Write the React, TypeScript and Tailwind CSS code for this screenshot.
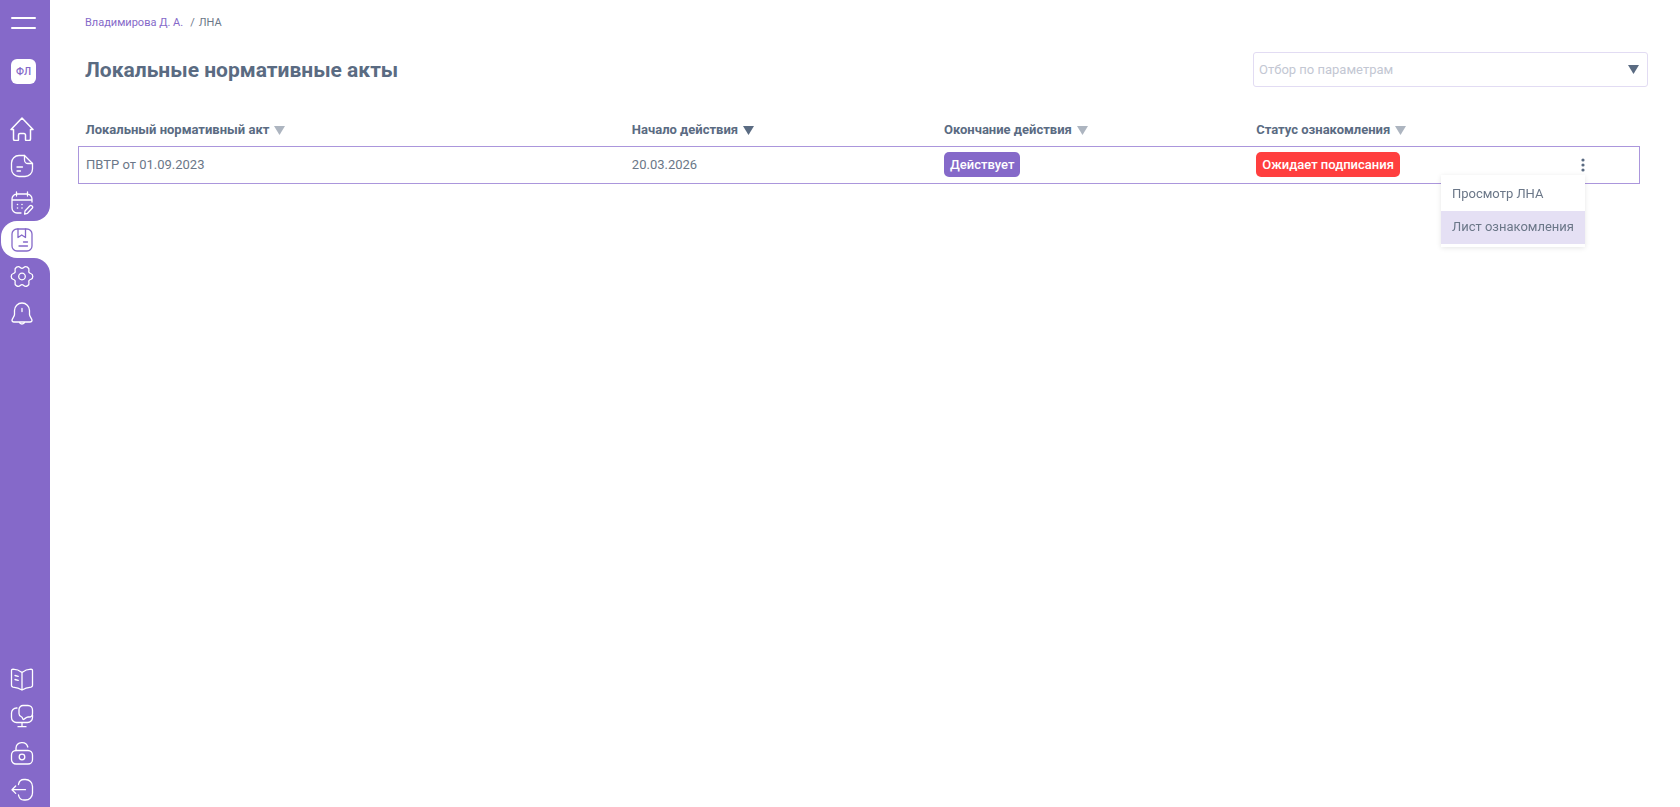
import type { ReactNode } from "react";

interface IconProps {
  children: ReactNode;
}

const Icon = ({ children }: IconProps) => (
  <svg
    viewBox="0 0 24 24"
    className="size-6"
    fill="none"
    stroke="currentColor"
    strokeWidth="1.3"
    strokeLinecap="round"
    strokeLinejoin="round"
    aria-hidden="true"
  >
    {children}
  </svg>
);

const HomeIcon = () => (
  <Icon>
    <path
      strokeWidth="1.5"
      d="M1 12.5 12 1l11 11.5h-2.5V22a1.500 1.500 0 0 1-1.500 1.500h-2.500a1 1 0 0 1-1-1V18a1.500 1.500 0 0 0-1.500-1.500h-4A1.500 1.500 0 0 0 8.500 18v4.500a1 1 0 0 1-1 1H5A1.500 1.500 0 0 1 3.500 22v-9.500Z"
    />
  </Icon>
);

const DocumentIcon = () => (
  <Icon>
    <path d="M14.500 1.500H9a7.500 7.500 0 0 0-7.500 7.500v6A7.500 7.500 0 0 0 9 22.500h6a7.500 7.500 0 0 0 7.500-7.500V9.500Z" />
    <path d="M14.500 1.500V6A3.500 3.500 0 0 0 18 9.500h4.500M7 13h5.500M7 17h3.500" />
  </Icon>
);

const CalendarIcon = () => (
  <Icon>
    <path d="M6.500 1v4M17.500 1v4M2 9h20M22 11V8a5 5 0 0 0-5-5H7a5 5 0 0 0-5 5v9a5 5 0 0 0 5 5h4" />
    <path d="M7.500 13.500h.01M12 13.500h.01M7.500 17h.01M12 17h.01" strokeWidth="1.6" />
    <path d="m15 20 4.700-5a1.700 1.700 0 0 1 2.500 2.300l-4.700 5-2.900.7Z" />
  </Icon>
);

const BookmarkIcon = () => (
  <Icon>
    <rect x="2" y="1" width="20" height="22" rx="5" />
    <path d="M8 1v8.500l3.700-2.500 3.800 2.500V1M13.500 14h4M9 18h8.500" />
  </Icon>
);

const SettingsIcon = () => (
  <Icon>
    <g transform="translate(12 11.5)">
      <path d="M10.800 0C10.800 3.800 8.010 2.320 7.010 4.050C6.010 5.780 8.690 7.450 5.400 9.350C2.110 11.250 2 8.100 0 8.100C-2 8.100-2.110 11.250-5.400 9.350C-8.690 7.450-6.010 5.780-7.010 4.050C-8.010 2.320-10.800 3.800-10.800 0C-10.800-3.800-8.010-2.320-7.010-4.050C-6.010-5.780-8.690-7.450-5.400-9.350C-2.110-11.250-2-8.100 0-8.100C2-8.100 2.110-11.250 5.400-9.350C8.690-7.450 6.010-5.780 7.010-4.050C8.010-2.320 10.800-3.800 10.800 0Z" />
      <circle r="3.300" />
    </g>
  </Icon>
);

const BellIcon = () => (
  <Icon>
    <path d="M12 1a7.500 7.500 0 0 0-7.500 7.500v4c0 2-2.500 4-2.500 5.700C2 19.500 3 20 4 20h16c1 0 2-.5 2-1.800 0-1.700-2.500-3.700-2.500-5.700v-4A7.500 7.500 0 0 0 12 1ZM9 20c.7 1.300 1.700 2 3 2s2.300-.7 3-2M12 6.500v3" />
  </Icon>
);

const BookIcon = () => (
  <Icon>
    <path d="M12 5.500v17.500M12 5.500C9.500 3.500 6 2.300 3 2.200c-1 0-1.500.5-1.500 1.500v14.800c0 1 .5 1.400 1.500 1.600 3.200.4 6.500 1.400 9 2.900 2.500-1.500 5.800-2.500 9-2.900 1-.2 1.500-.6 1.500-1.600V3.700c0-1-.5-1.500-1.500-1.500-3 .1-6.500 1.300-9 3.300ZM5 8.500l3.200.8M5 12.500l3.200.8" />
  </Icon>
);

const SupportIcon = () => (
  <Icon>
    <path d="M7 4h-.5a5 5 0 0 0-5 5v4.500a5 5 0 0 0 5 5h11a5 5 0 0 0 5-5V11M12 18.500v4M8 22.700h8" />
    <path d="M13 1.500h5A4.500 4.500 0 0 1 22.500 6v3.500c0 2-1.500 3.500-3.500 3.500h-1c-1.500 0-2.500 1.200-4 2.200-.7.500-1.200.3-1.300-.5-.2-1.200-.7-1.700-1.700-2.200-1.300-.6-2-1.700-2-3V5.500a4 4 0 0 1 4-4Z" />
  </Icon>
);

const LockIcon = () => (
  <Icon>
    <rect x="1.500" y="9.500" width="21" height="13.500" rx="4.500" />
    <path d="M6 9.500V7a6 5.800 0 0 1 11.800-1" />
    <circle cx="12" cy="16" r="2.800" />
  </Icon>
);

const LogoutIcon = () => (
  <Icon>
    <path d="M8.500 6.500C9 3.500 11 1.500 14 1.500h1.500a7 7 0 0 1 7 7v6.500a7 7 0 0 1-7 7H14c-3 0-5-2-5.500-5M15.500 11.700H2M5.700 8 2 11.700l3.700 3.700" />
  </Icon>
);

interface NavItemProps {
  label: string;
  children: ReactNode;
}

const NavItem = ({ label, children }: NavItemProps) => (
  <a
    href="#"
    aria-label={label}
    className="flex h-[37px] items-center pl-[10px] text-white"
  >
    {children}
  </a>
);

const Sidebar = () => (
  <nav className="sticky top-0 flex h-screen w-[50px] shrink-0 flex-col">
    {/* everything above the active item */}
    <div className="rounded-br-2xl bg-[#8569c9]">
      <button
        type="button"
        aria-label="Меню"
        className="mt-[17px] ml-[11px] flex w-[25px] flex-col gap-2"
      >
        <span className="h-0.5 w-full rounded-full bg-white" />
        <span className="h-0.5 w-full rounded-full bg-white" />
      </button>
      <a
        href="#"
        className="mt-[30px] mb-[26px] ml-[11px] flex size-[25px] items-center justify-center rounded-md bg-white text-[10px] font-medium text-[#8569c9]"
      >
        ФЛ
      </a>
      <NavItem label="Главная">
        <HomeIcon />
      </NavItem>
      <NavItem label="Документы">
        <DocumentIcon />
      </NavItem>
      <NavItem label="Календарь">
        <CalendarIcon />
      </NavItem>
    </div>
    {/* active item */}
    <div className="bg-linear-to-r from-[#8569c9] from-50% to-white to-50% pl-px">
      <a
        href="#"
        aria-label="ЛНА"
        aria-current="page"
        className="flex h-[37px] items-center rounded-l-2xl bg-white pl-[9px] text-[#8569c9]"
      >
        <BookmarkIcon />
      </a>
    </div>
    {/* everything below */}
    <div className="flex flex-1 flex-col justify-between rounded-tr-2xl bg-[#8569c9]">
      <div>
        <NavItem label="Настройки">
          <SettingsIcon />
        </NavItem>
        <NavItem label="Уведомления">
          <BellIcon />
        </NavItem>
      </div>
      <div className="-mb-px">
        <NavItem label="Инструкции">
          <BookIcon />
        </NavItem>
        <NavItem label="Поддержка">
          <SupportIcon />
        </NavItem>
        <NavItem label="Доступ">
          <LockIcon />
        </NavItem>
        <NavItem label="Выход">
          <LogoutIcon />
        </NavItem>
      </div>
    </div>
  </nav>
);

const Triangle = () => (
  <svg viewBox="0 0 11 9" className="h-[9px] w-[11px]" aria-hidden="true">
    <path d="M0 0h11L5.500 9Z" fill="currentColor" />
  </svg>
);

interface HeadCellProps {
  title: string;
  width: string;
  sorted?: boolean;
}

const HeadCell = ({ title, width, sorted = false }: HeadCellProps) => (
  <th className={`${width} px-[7px] text-left font-bold`}>
    <button
      type="button"
      data-sorted={sorted}
      className="group flex items-center gap-[5px]"
    >
      {title}
      <span className="text-[#adb5c0] group-data-[sorted=true]:text-[#5a6b82]">
        <Triangle />
      </span>
    </button>
  </th>
);

const columns = [
  { title: "Локальный нормативный акт", width: "w-[35%]" },
  { title: "Начало действия", width: "w-[20%]", sorted: true },
  { title: "Окончание действия", width: "w-[20%]" },
  { title: "Статус ознакомления", width: "w-[25%]" },
];

const RowMenu = () => (
  <div className="relative">
    <button
      type="button"
      aria-label="Действия"
      aria-expanded="true"
      className="flex h-6 w-3 items-center justify-center"
    >
      <svg viewBox="0 0 4 14" className="h-3.5 w-1" aria-hidden="true">
        <g fill="#5a6b82">
          <circle cx="2" cy="2" r="1.600" />
          <circle cx="2" cy="7" r="1.600" />
          <circle cx="2" cy="12" r="1.600" />
        </g>
      </svg>
    </button>
    <div
      role="menu"
      className="absolute top-[22px] right-1 z-10 bg-white pt-[3px] pb-[3px] whitespace-nowrap shadow-[0_1px_5px_rgba(0,0,0,0.1)]"
    >
      <button
        type="button"
        role="menuitem"
        className="block h-[33px] w-full px-[11px] text-left"
      >
        Просмотр ЛНА
      </button>
      <button
        type="button"
        role="menuitem"
        className="block h-[33px] w-full bg-[#e5e0f4] px-[11px] text-left"
      >
        Лист ознакомления
      </button>
    </div>
  </div>
);

export default function App() {
  return (
    <div className="flex min-h-screen bg-white font-[Roboto,sans-serif] text-[13px] leading-5 text-[#6b7788]">
      <Sidebar />
      <main className="min-w-0 flex-1 pr-8 pl-7">
        {/* breadcrumbs */}
        <div className="flex gap-[7px] px-[7px] pt-[15px] text-[11px] leading-4">
          <a href="#" className="text-[#8569c9]">
            Владимирова Д. А.
          </a>
          <span className="flex gap-1">
            <span>/</span>
            <span>ЛНА</span>
          </span>
        </div>
        {/* title and filter */}
        <div className="mt-[21px] flex items-center justify-between">
          <h1 className="pl-[7px] text-[21px] leading-8 font-bold text-[#5a6b82]">
            Локальные нормативные акты
          </h1>
          <div className="flex h-[35px] w-[395px] items-center rounded-[3px] border border-[#e2dcf3] pr-2 pl-[5px]">
            <input
              type="text"
              aria-label="Отбор по параметрам"
              placeholder="Отбор по параметрам"
              className="min-w-0 flex-1 outline-none placeholder:text-[#c3c7d3]"
            />
            <button
              type="button"
              aria-label="Открыть отбор"
              className="text-[#5a6b82]"
            >
              <Triangle />
            </button>
          </div>
        </div>
        {/* table */}
        <div className="mt-7 pr-2">
          <table className="w-full table-fixed border-collapse">
            <thead>
              <tr className="h-[31px] text-[#5a6b82]">
                {columns.map(column => (
                  <HeadCell key={column.title} {...column} />
                ))}
              </tr>
            </thead>
            <tbody>
              <tr className="h-[37px] border border-[#ab96dc]">
                <td className="px-[7px]">ПВТР от 01.09.2023</td>
                <td className="px-[7px]">20.03.2026</td>
                <td className="px-[7px]">
                  <span className="inline-block rounded-[5px] bg-[#8569c9] px-1.5 leading-[25px] font-medium text-white">
                    Действует
                  </span>
                </td>
                <td className="px-[7px]">
                  <div className="flex items-center justify-between pr-[43px]">
                    <span className="rounded-[5px] bg-[#ff3f3f] px-1.5 leading-[25px] font-medium text-white">
                      Ожидает подписания
                    </span>
                    <RowMenu />
                  </div>
                </td>
              </tr>
            </tbody>
          </table>
        </div>
      </main>
    </div>
  );
}
